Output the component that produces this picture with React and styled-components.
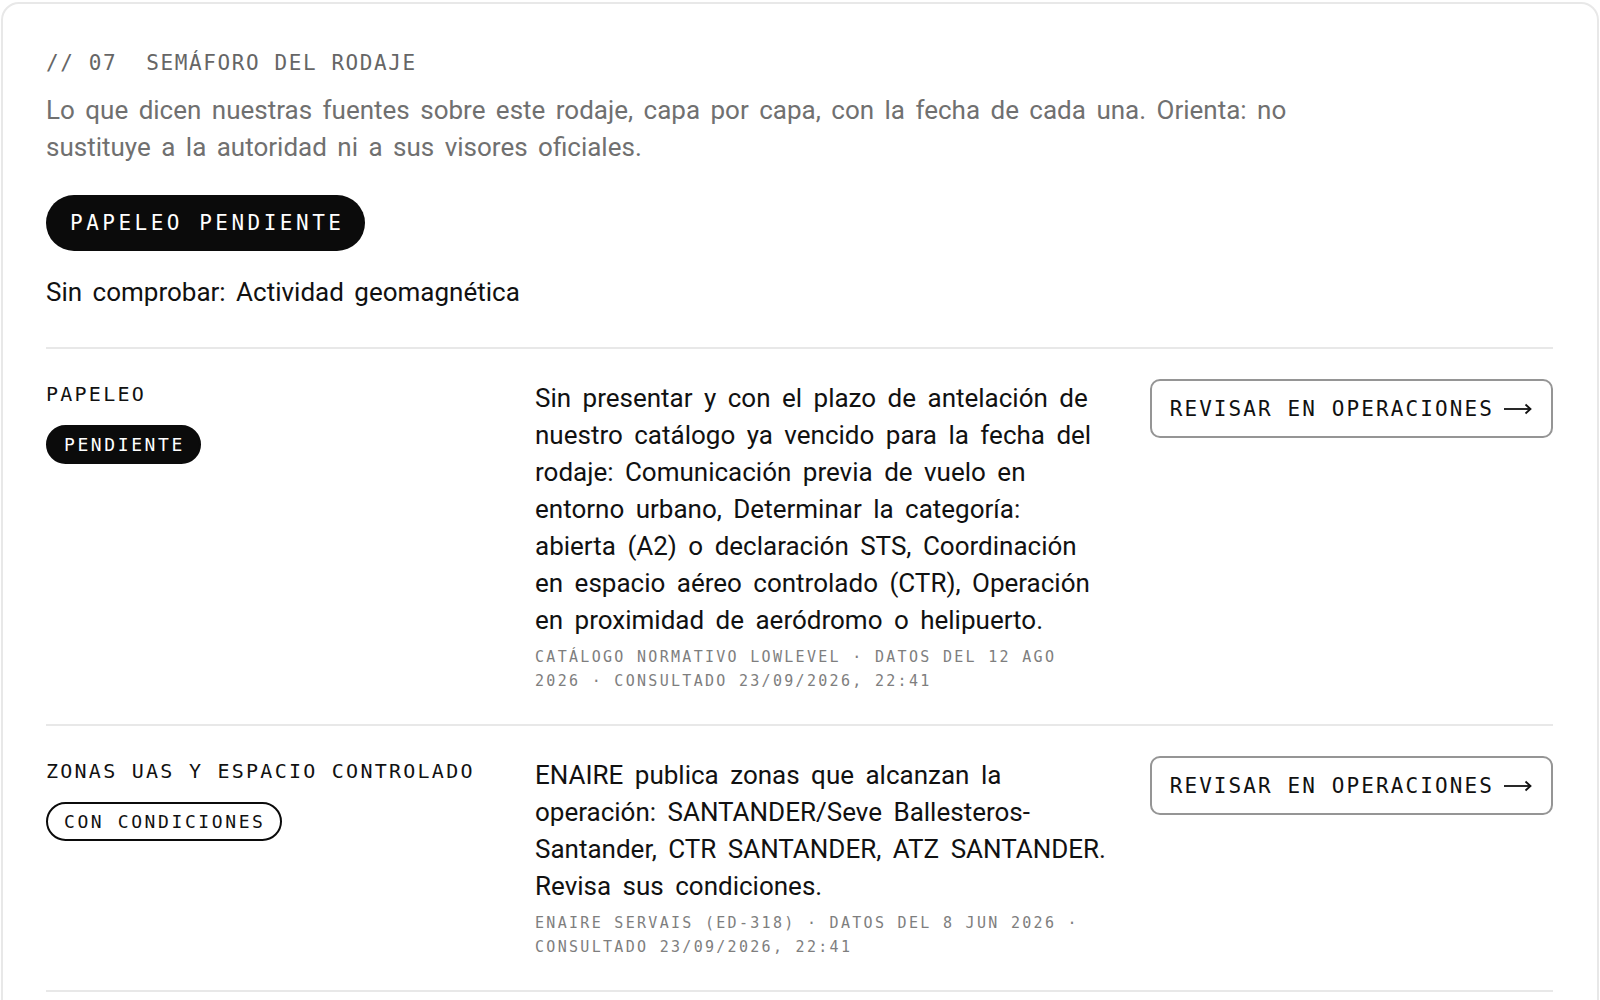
import React from "react";
import styled, { createGlobalStyle } from "styled-components";

const GlobalStyle = createGlobalStyle`
  html, body { margin: 0; padding: 0; background: #ffffff; }
  body {
    font-family: Roboto, "Noto Sans", sans-serif;
    color: #111111;
    -webkit-font-smoothing: antialiased;
  }
  * { box-sizing: border-box; }
`;

const MONO = `"DejaVu Sans Mono", "Liberation Mono", monospace`;
const SANS = `Roboto, Inter, "Noto Sans", sans-serif`;

const Page = styled.div`
  padding: 2px 0 0 1px;
`;

const Card = styled.section`
  width: 1598px;
  border: 2px solid #e8e8e8;
  border-radius: 18px;
  padding: 46px 44px 60px 43px;
  background: #fff;
`;

const Eyebrow = styled.div`
  display: flex;
  gap: 29px;
  font-family: ${MONO};
  font-size: 21px;
  line-height: 26px;
  letter-spacing: 1.6px;
  color: #666;
`;

const Lead = styled.p`
  margin: 16px 0 0;
  max-width: 1290px;
  font-family: ${SANS};
  font-size: 26px;
  line-height: 37px;
  word-spacing: 4px;
  color: #707070;
`;

const StatusPill = styled.div`
  display: inline-flex;
  align-items: center;
  height: 56px;
  margin-top: 29px;
  padding: 0 21px 0 24px;
  border-radius: 999px;
  background: #0b0b0b;
  color: #fff;
  font-family: ${MONO};
  font-size: 21px;
  letter-spacing: 3.5px;
`;

const Unchecked = styled.p`
  margin: 23px 0 0;
  font-family: ${SANS};
  font-size: 26px;
  line-height: 37px;
  word-spacing: 4px;
  color: #111;
`;

const List = styled.div`
  margin-top: 36px;
  border-bottom: 2px solid #e8e8e8;
`;

const Row = styled.div`
  display: grid;
  grid-template-columns: 460px 576px 1fr;
  column-gap: 29px;
  padding: 30px 0 31px;
  border-top: 2px solid #e8e8e8;
`;

const Layer = styled.div`
  display: flex;
  flex-direction: column;
  align-items: flex-start;
  padding-top: 3px;
`;

const LayerName = styled.div`
  font-family: ${MONO};
  font-size: 20px;
  line-height: 24px;
  letter-spacing: 2.25px;
  color: #111;
`;

const Badge = styled.span`
  display: inline-flex;
  align-items: center;
  height: 39px;
  margin-top: 19px;
  padding: 0 14px 0 16px;
  border-radius: 999px;
  border: 2px solid #0b0b0b;
  background: ${(p) => (p.$filled ? "#0b0b0b" : "#fff")};
  color: ${(p) => (p.$filled ? "#fff" : "#111")};
  font-family: ${MONO};
  font-size: 18px;
  letter-spacing: 2.6px;
`;

const Detail = styled.div`
  display: flex;
  flex-direction: column;
  padding-top: 1px;
`;

const DetailText = styled.p`
  margin: 0;
  font-family: ${SANS};
  font-size: 26px;
  line-height: 37px;
  word-spacing: 5px;
  color: #111;
`;

const Source = styled.p`
  margin: 6px 0 0;
  max-width: 560px;
  font-family: ${MONO};
  font-size: 15px;
  line-height: 24px;
  letter-spacing: 2.3px;
  color: #7e7e7e;
`;

const Action = styled.a`
  justify-self: end;
  align-self: start;
  display: inline-flex;
  align-items: center;
  gap: 10px;
  height: 59px;
  padding: 0 19px 0 18px;
  border: 2px solid #959595;
  border-radius: 10px;
  color: #111;
  text-decoration: none;
  font-family: ${MONO};
  font-size: 21px;
  letter-spacing: 2.1px;
  white-space: nowrap;
`;

const Arrow = () => (
  <svg width="28" height="12" viewBox="0 0 28 12" fill="none" aria-hidden="true">
    <path d="M0 6H26.5" stroke="#111" strokeWidth="1.8" />
    <path d="M21.5 1.5L26.5 6L21.5 10.5" stroke="#111" strokeWidth="1.8" strokeLinejoin="miter" />
  </svg>
);

const rows = [
  {
    name: "PAPELEO",
    badge: "PENDIENTE",
    filled: true,
    text:
      "Sin presentar y con el plazo de antelación de nuestro catálogo ya vencido para la fecha del rodaje: Comunicación previa de vuelo en entorno urbano, Determinar la categoría: abierta (A2) o declaración STS, Coordinación en espacio aéreo controlado (CTR), Operación en proximidad de aeródromo o helipuerto.",
    source: "CATÁLOGO NORMATIVO LOWLEVEL · DATOS DEL 12 AGO 2026 · CONSULTADO 23/09/2026, 22:41",
  },
  {
    name: "ZONAS UAS Y ESPACIO CONTROLADO",
    badge: "CON CONDICIONES",
    filled: false,
    text:
      "ENAIRE publica zonas que alcanzan la operación: SANTANDER/Seve Ballesteros-Santander, CTR SANTANDER, ATZ SANTANDER. Revisa sus condiciones.",
    source: "ENAIRE SERVAIS (ED-318) · DATOS DEL 8 JUN 2026 · CONSULTADO 23/09/2026, 22:41",
  },
];

export default function App() {
  return (
    <>
      <GlobalStyle />
      <Page>
        <Card>
          <Eyebrow>
            <span>// 07</span>
            <span>SEMÁFORO DEL RODAJE</span>
          </Eyebrow>
          <Lead>
            Lo que dicen nuestras fuentes sobre este rodaje, capa por capa, con la fecha de cada una. Orienta: no
            sustituye a la autoridad ni a sus visores oficiales.
          </Lead>
          <StatusPill>PAPELEO PENDIENTE</StatusPill>
          <Unchecked>Sin comprobar: Actividad geomagnética</Unchecked>
          <List>
            {rows.map((r) => (
              <Row key={r.name}>
                <Layer>
                  <LayerName>{r.name}</LayerName>
                  <Badge $filled={r.filled}>{r.badge}</Badge>
                </Layer>
                <Detail>
                  <DetailText>{r.text}</DetailText>
                  <Source>{r.source}</Source>
                </Detail>
                <Action href="#">
                  <span>REVISAR EN OPERACIONES</span>
                  <Arrow />
                </Action>
              </Row>
            ))}
          </List>
        </Card>
      </Page>
    </>
  );
}
